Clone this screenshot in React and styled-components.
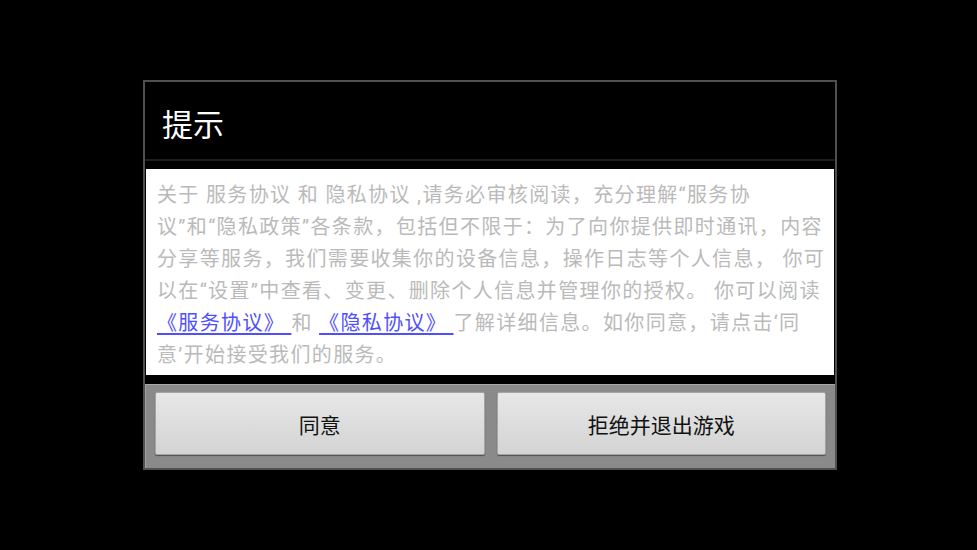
import React from "react";
import styled, { createGlobalStyle } from "styled-components";

const GlobalStyle = createGlobalStyle`
  html, body {
    margin: 0;
    padding: 0;
    background: #000;
  }
  body {
    font-family: Roboto, "Noto Sans CJK SC", sans-serif;
  }
`;

const Screen = styled.div`
  width: 977px;
  height: 550px;
  background: #000;
  padding: 80px 0 0 143px;
  box-sizing: border-box;
`;

const Dialog = styled.div`
  width: 694px;
  border: 2px solid #505050;
  box-sizing: border-box;
  background: #000;
  display: flex;
  flex-direction: column;
`;

const TitleBar = styled.div`
  height: 77px;
  display: flex;
  align-items: center;
  padding-left: 17px;
  padding-top: 4px;
  box-sizing: border-box;
  color: #fff;
  font-size: 31px;
`;

const Divider = styled.div`
  height: 2px;
  background: #1e1e1e;
  margin-bottom: 8px;
`;

const Message = styled.div`
  margin: 0 1px;
  background: #fff;
  padding: 10px 11px 4px;
  color: #bababa;
  font-family: Roboto, "Noto Sans CJK SC", sans-serif;
  font-size: 20px;
  line-height: 32px;
  letter-spacing: 1.35px;
  white-space: nowrap;
`;

const Link = styled.a`
  color: #4f4fff;
  text-decoration: underline;
  text-underline-offset: 3px;
`;

const ButtonBar = styled.div`
  margin-top: 9px;
  background: #8a8a8a;
  border-top: 1px solid #a8a8a8;
  border-left: 1px solid #a0a0a0;
  display: flex;
  gap: 12px;
  padding: 7px 9px 13px;
`;

const Button = styled.button`
  flex: 1;
  height: 63px;
  background: linear-gradient(#e7e7e7, #d3d3d3);
  border: 1px solid #a4a4a4;
  border-radius: 2px;
  box-shadow: 0 1px 1px rgba(0, 0, 0, 0.45);
  color: #111;
  font-family: Roboto, "Noto Sans CJK SC", sans-serif;
  font-size: 21px;
  padding: 0;
`;

export default function App() {
  return (
    <>
      <GlobalStyle />
      <Screen>
        <Dialog>
          <TitleBar>提示</TitleBar>
          <Divider />
          <Message>
            关于 服务协议 和 隐私协议 ,请务必审核阅读，充分理解“服务协
            <br />
            议”和“隐私政策”各条款，包括但不限于：为了向你提供即时通讯，内容
            <br />
            分享等服务，我们需要收集你的设备信息，操作日志等个人信息， 你可
            <br />
            以在“设置”中查看、变更、删除个人信息并管理你的授权。 你可以阅读
            <br />
            <Link> 《服务协议》 </Link> 和 <Link> 《隐私协议》 </Link> 了解详细信息。如你同意，请点击‘同
            <br />
            意’开始接受我们的服务。
          </Message>
          <ButtonBar>
            <Button>同意</Button>
            <Button>拒绝并退出游戏</Button>
          </ButtonBar>
        </Dialog>
      </Screen>
    </>
  );
}
